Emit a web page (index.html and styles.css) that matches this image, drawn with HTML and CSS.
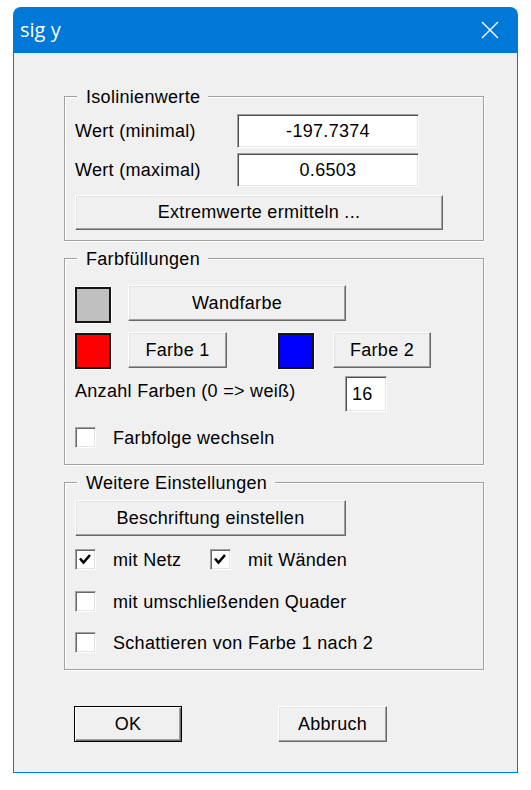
FILE: index.html
```html
<!DOCTYPE html>
<html lang="de">
<head>
<meta charset="utf-8">
<title>sig y</title>
<link rel="stylesheet" href="styles.css">
</head>
<body>
<div class="window">
  <div class="titlebar">
    <span class="title">sig y</span>
    <svg class="close" viewBox="0 0 18 18" aria-label="Schließen"><path d="M1 1 L17 17 M17 1 L1 17" stroke="#fff" stroke-width="1.4" fill="none"/></svg>
  </div>
  <div class="client">
    <div class="group g1">
      <div class="group-title">Isolinienwerte</div>
      <div class="value-grid">
        <span class="label">Wert (minimal)</span>
        <div class="field wide">-197.7374</div>
        <span class="label">Wert (maximal)</span>
        <div class="field wide">0.6503</div>
      </div>
      <button class="btn btn-extrem">Extremwerte ermitteln ...</button>
    </div>

    <div class="group g2">
      <div class="group-title">Farbfüllungen</div>
      <div class="row row-a">
        <div class="swatch gray"></div>
        <button class="btn btn-wand">Wandfarbe</button>
      </div>
      <div class="row row-b">
        <div class="swatch red"></div>
        <button class="btn btn-f1">Farbe 1</button>
        <div class="swatch blue"></div>
        <button class="btn btn-f2">Farbe 2</button>
      </div>
      <div class="row row-c">
        <span class="count-label">Anzahl Farben (0 =&gt; weiß)</span>
        <div class="field small">16</div>
      </div>
      <div class="row row-d">
        <div class="check"><span class="box"></span><span class="check-label">Farbfolge wechseln</span></div>
      </div>
    </div>

    <div class="group g3">
      <div class="group-title">Weitere Einstellungen</div>
      <button class="btn btn-beschr">Beschriftung einstellen</button>
      <div class="row row-c1">
        <div class="check first"><span class="box"><svg viewBox="0 0 19 19"><polyline points="4,8.5 7.5,12.5 14,5" stroke="#000" stroke-width="2.6" fill="none"/></svg></span><span class="check-label">mit Netz</span></div>
        <div class="check"><span class="box"><svg viewBox="0 0 19 19"><polyline points="4,8.5 7.5,12.5 14,5" stroke="#000" stroke-width="2.6" fill="none"/></svg></span><span class="check-label">mit Wänden</span></div>
      </div>
      <div class="row row-c2">
        <div class="check"><span class="box"></span><span class="check-label">mit umschließenden Quader</span></div>
      </div>
      <div class="row row-c3">
        <div class="check"><span class="box"></span><span class="check-label">Schattieren von Farbe 1 nach 2</span></div>
      </div>
    </div>

    <div class="footer">
      <button class="btn btn-default btn-ok">OK</button>
      <button class="btn btn-cancel">Abbruch</button>
    </div>
  </div>
</div>
</body>
</html>
```

FILE: styles.css
```css
* { box-sizing: border-box; }

body {
  margin: 0;
  background: #ffffff;
  font-family: "Liberation Sans", Arial, sans-serif;
  font-size: 18px;
  letter-spacing: 0.3px;
  color: #000;
}

.window {
  margin: 7px 0 0 13px;
  width: 505px;
}

.titlebar {
  height: 46px;
  background: #0078d7;
  border-radius: 8px 8px 0 0;
  display: flex;
  align-items: center;
  justify-content: space-between;
  padding: 0 19px 0 7px;
}

.title {
  font-family: "Open Sans", "Noto Sans", sans-serif;
  font-size: 20px;
  letter-spacing: 0;
  line-height: 46px;
  color: #fff;
}

.close {
  display: block;
  width: 18px;
  height: 18px;
}

.client {
  height: 720px;
  background: #f0f0f0;
  border: 1px solid #0078d7;
  border-top: 0;
  padding: 43px 0 0 50px;
}

.group {
  width: 420px;
  border: 1px solid #a0a0a0;
  box-shadow: inset 1px 1px 0 #fff, 1px 1px 0 #fff;
  display: flex;
  flex-direction: column;
  align-items: flex-start;
  padding: 0 10px 10px 10px;
}

.group + .group { margin-top: 17px; }

.group-title {
  margin: -10px 0 0 2px;
  padding: 0 8px 0 9px;
  line-height: 20px;
  background: #f0f0f0;
}

/* controls */
.btn {
  display: flex;
  align-items: center;
  justify-content: center;
  padding: 0;
  margin: 0;
  font: inherit;
  letter-spacing: inherit;
  color: #000;
  background: #f0f0f0;
  border: 1px solid;
  border-color: #fff #696969 #696969 #fff;
  box-shadow: inset -1px -1px 0 #a0a0a0, inset 1px 1px 0 #e3e3e3;
  height: 36px;
}

.btn-default {
  border-color: #000;
  box-shadow: inset 1px 1px 0 #fff, inset -1px -1px 0 #696969, inset -2px -2px 0 #a0a0a0;
}

.field {
  display: flex;
  align-items: center;
  justify-content: center;
  background: #fff;
  border: 1px solid;
  border-color: #a0a0a0 #fff #fff #a0a0a0;
  box-shadow: inset 1px 1px 0 #505050, inset -1px -1px 0 #e3e3e3;
}

/* group 1 */
.value-grid {
  margin-top: 7px;
  display: grid;
  grid-template-columns: 162px 182px;
  grid-auto-rows: 34px;
  row-gap: 5px;
  align-items: center;
}

.label { line-height: 20px; }

.field.wide { height: 34px; }

.btn-extrem {
  margin-top: 8px;
  width: 368px;
  height: 35px;
}

/* group 2 */
.g2 { padding-bottom: 16px; }

.row {
  display: flex;
  align-items: flex-start;
}

.swatch {
  width: 36px;
  height: 36px;
  border: 2px solid #141414;
  box-shadow: 0 0 0 1px #fff;
  margin-right: 17px;
}

.swatch.gray { background: #c0c0c0; }
.swatch.red { background: #ff0000; }
.swatch.blue { background: #0000ff; margin-right: 19px; }

.row-a { margin-top: 16px; height: 36px; }
.row-a .swatch { margin-top: 2px; }
.btn-wand { width: 218px; }

.row-b { margin-top: 11px; height: 36px; }
.row-b .swatch { margin-top: 1px; }
.btn-f1 { width: 99px; margin-right: 51px; }
.btn-f2 { width: 98px; }

.row-c { margin-top: 8px; }
.count-label {
  width: 270px;
  margin-top: 5px;
  line-height: 20px;
}
.field.small {
  width: 42px;
  height: 36px;
  justify-content: flex-start;
  padding-left: 6px;
}

.row-d { margin-top: 15px; }

.check {
  display: flex;
  align-items: center;
}

.check.first { width: 135px; }

.box {
  width: 21px;
  height: 21px;
  margin-right: 17px;
  background: #fff;
  border: 1px solid;
  border-color: #a0a0a0 #fff #fff #a0a0a0;
  box-shadow: inset 1px 1px 0 #696969, inset -1px -1px 0 #e3e3e3;
}

.box svg {
  display: block;
  width: 19px;
  height: 19px;
}

.check-label { line-height: 20px; }

/* group 3 */
.g3 { padding-bottom: 16px; }

.btn-beschr {
  margin-top: 7px;
  width: 271px;
}

.row-c1 { margin-top: 13px; }
.row-c2 { margin-top: 21px; }
.row-c3 { margin-top: 20px; }

/* footer */
.footer {
  margin-top: 36px;
  padding-left: 10px;
  display: flex;
}

.btn-ok { width: 108px; }
.btn-cancel { width: 109px; margin-left: 96px; }
```
